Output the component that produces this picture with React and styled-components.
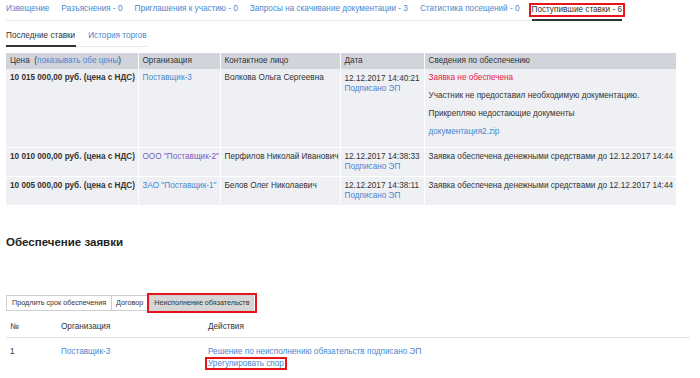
import React from "react";
import styled, { createGlobalStyle } from "styled-components";

const Global = createGlobalStyle`
  html, body { margin: 0; padding: 0; background: #fff; }
  body {
    font-family: "Liberation Sans", Arial, sans-serif;
    font-size: 8.2px;
    color: #333;
  }
`;

const Page = styled.div`
  padding: 0 6px;
  width: 688px;
`;

const Nav = styled.div`
  display: flex;
  width: fit-content;
  gap: 12px;
  border-bottom: 1px solid #e6e6e6;
  padding-top: 2px;
`;

const NavItem = styled.a`
  display: block;
  line-height: 10px;
  padding: 2px 0 2px;
  color: ${(p) => (p.$active ? "#333" : "#4a86d0")};
  text-decoration: none;
  margin-bottom: -1px;
  border-bottom: 2px solid ${(p) => (p.$active ? "#333" : "transparent")};
  white-space: nowrap;
`;

const Marked = styled.span`
  display: block;
  border: 2px solid #e8141b;
  margin: -1px -3px 0;
  padding: 0 1px;
`;

const Tabs = styled.div`
  display: flex;
  width: fit-content;
  gap: 12px;
  border-bottom: 1px solid #e6e6e6;
  margin-top: 8px;
`;

const Tab = styled.a`
  display: block;
  line-height: 10px;
  padding: 2px 1px 4px 0;
  color: ${(p) => (p.$active ? "#333" : "#4a86d0")};
  margin-bottom: -1px;
  border-bottom: 2px solid ${(p) => (p.$active ? "#333" : "transparent")};
`;

const Grid = styled.table`
  border-collapse: collapse;
  margin-top: 6px;
  width: 670px;
  table-layout: fixed;
  line-height: 10px;
`;

const Th = styled.th`
  background: #d1d5db;
  font-weight: normal;
  text-align: left;
  padding: 3px 4px;
  border-right: 1px solid #fff;
  white-space: nowrap;
  &:last-child { border-right: 0; }
`;

const Td = styled.td`
  background: #eef0f3;
  vertical-align: top;
  padding: 4px 4px 4px;
  border-right: 1px solid #fff;
  border-bottom: 1px solid #fff;
  white-space: nowrap;
  font-weight: ${(p) => (p.$bold ? "bold" : "normal")};
  &:last-child { border-right: 0; }
`;

const Link = styled.a`
  color: ${(p) => (p.$visited ? "#7f5bbf" : "#4a86d0")};
  text-decoration: none;
`;

const Line = styled.div`
  line-height: ${(p) => p.$lh || "10px"};
`;

const Para = styled.div`
  line-height: 10px;
  margin-bottom: 8px;
  color: ${(p) => (p.$red ? "#e8204a" : "inherit")};
  &:last-child { margin-bottom: 6px; }
`;

const Heading = styled.h2`
  font-size: 11.5px;
  font-weight: bold;
  margin: 29px 0 0;
  line-height: 14px;
  color: #222;
`;

const BtnGroup = styled.div`
  display: flex;
  align-items: center;
  margin-top: 44px;
  padding-left: 1px;
`;

const Btn = styled.button`
  font-family: inherit;
  font-size: 7.2px;
  color: #333;
  height: 16px;
  padding: 0 ${(p) => (p.$tight ? "4px" : "5px")};
  background: ${(p) => (p.$active ? "#d6d6d6" : "#fff")};
  border: 1px solid #cfcfcf;
  margin-left: ${(p) => (p.$active ? "0" : "-1px")};
  line-height: 14px;
`;

const BtnMark = styled.span`
  display: inline-flex;
  border: 2px solid #e8141b;
  margin-left: -1px;
  padding: 0 1px 0 0;
`;

const Plain = styled.table`
  border-collapse: collapse;
  width: 684px;
  table-layout: fixed;
  margin-top: 4px;
  line-height: 10px;
`;

const PTh = styled.th`
  text-align: left;
  font-weight: normal;
  padding: 5px 4px 5px;
  border-bottom: 1px solid #e2e2e2;
`;

const PTd = styled.td`
  vertical-align: top;
  padding: 9px 4px;
`;

const LinkMark = styled.span`
  display: inline-block;
  border: 2px solid #e8141b;
  margin-left: -3px;
  padding: 0 1px;
  line-height: 9px;
`;

const bids = [
  {
    price: "10 015 000,00 руб. (цена с НДС)",
    org: "Поставщик-3",
    visited: false,
    person: "Волкова Ольга Сергеевна",
    date: "12.12.2017 14:40:21",
    info: null,
  },
  {
    price: "10 010 000,00 руб. (цена с НДС)",
    org: 'ООО "Поставщик-2"',
    visited: true,
    person: "Перфилов Николай Иванович",
    date: "12.12.2017 14:38:33",
    info: "Заявка обеспечена денежными средствами до 12.12.2017 14:44",
  },
  {
    price: "10 005 000,00 руб. (цена с НДС)",
    org: 'ЗАО "Поставщик-1"',
    visited: false,
    person: "Белов Олег Николаевич",
    date: "12.12.2017 14:38:11",
    info: "Заявка обеспечена денежными средствами до 12.12.2017 14:44",
  },
];

export default function App() {
  return (
    <Page>
      <Global />
      <Nav>
        <NavItem>Извещение</NavItem>
        <NavItem>Разъяснения - 0</NavItem>
        <NavItem>Приглашения к участию - 0</NavItem>
        <NavItem>Запросы на скачивание документации - 3</NavItem>
        <NavItem>Статистика посещений - 0</NavItem>
        <NavItem $active>
          <Marked>Поступившие ставки - 6</Marked>
        </NavItem>
      </Nav>
      <Tabs>
        <Tab $active>Последние ставки</Tab>
        <Tab>История торгов</Tab>
      </Tabs>
      <Grid>
        <colgroup>
          <col style={{ width: 132 }} />
          <col style={{ width: 82 }} />
          <col style={{ width: 120 }} />
          <col style={{ width: 84 }} />
          <col style={{ width: 252 }} />
        </colgroup>
        <thead>
          <tr>
            <Th>
              Цена&nbsp; (<Link>показывать обе цены</Link>)
            </Th>
            <Th>Организация</Th>
            <Th>Контактное лицо</Th>
            <Th>Дата</Th>
            <Th>Сведения по обеспечению</Th>
          </tr>
        </thead>
        <tbody>
          {bids.map((b, i) => (
            <tr key={i}>
              <Td $bold>{b.price}</Td>
              <Td>
                <Link $visited={b.visited}>{b.org}</Link>
              </Td>
              <Td>{b.person}</Td>
              <Td>
                <Line $lh={i === 0 ? "11px" : "10px"}>{b.date}</Line>
                <Line>
                  <Link>Подписано ЭП</Link>
                </Line>
              </Td>
              <Td>
                {b.info ? (
                  <Line>{b.info}</Line>
                ) : (
                  <>
                    <Para $red>Заявка не обеспечена</Para>
                    <Para>Участник не предоставил необходимую документацию.</Para>
                    <Para>Прикрепляю недостающие документы</Para>
                    <Para>
                      <Link>документация2.zip</Link>
                    </Para>
                  </>
                )}
              </Td>
            </tr>
          ))}
        </tbody>
      </Grid>
      <Heading>Обеспечение заявки</Heading>
      <BtnGroup>
        <Btn>Продлить срок обеспечения</Btn>
        <Btn $tight>Договор</Btn>
        <BtnMark>
          <Btn $active $tight>Неисполнение обязательств</Btn>
        </BtnMark>
      </BtnGroup>
      <Plain>
        <colgroup>
          <col style={{ width: 51 }} />
          <col style={{ width: 147 }} />
          <col />
        </colgroup>
        <thead>
          <tr>
            <PTh>№</PTh>
            <PTh>Организация</PTh>
            <PTh>Действия</PTh>
          </tr>
        </thead>
        <tbody>
          <tr>
            <PTd>1</PTd>
            <PTd>
              <Link>Поставщик-3</Link>
            </PTd>
            <PTd>
              <Line>
                <Link>Решение по неисполнению обязательств подписано ЭП</Link>
              </Line>
              <LinkMark>
                <Link>Урегулировать спор</Link>
              </LinkMark>
            </PTd>
          </tr>
        </tbody>
      </Plain>
    </Page>
  );
}
